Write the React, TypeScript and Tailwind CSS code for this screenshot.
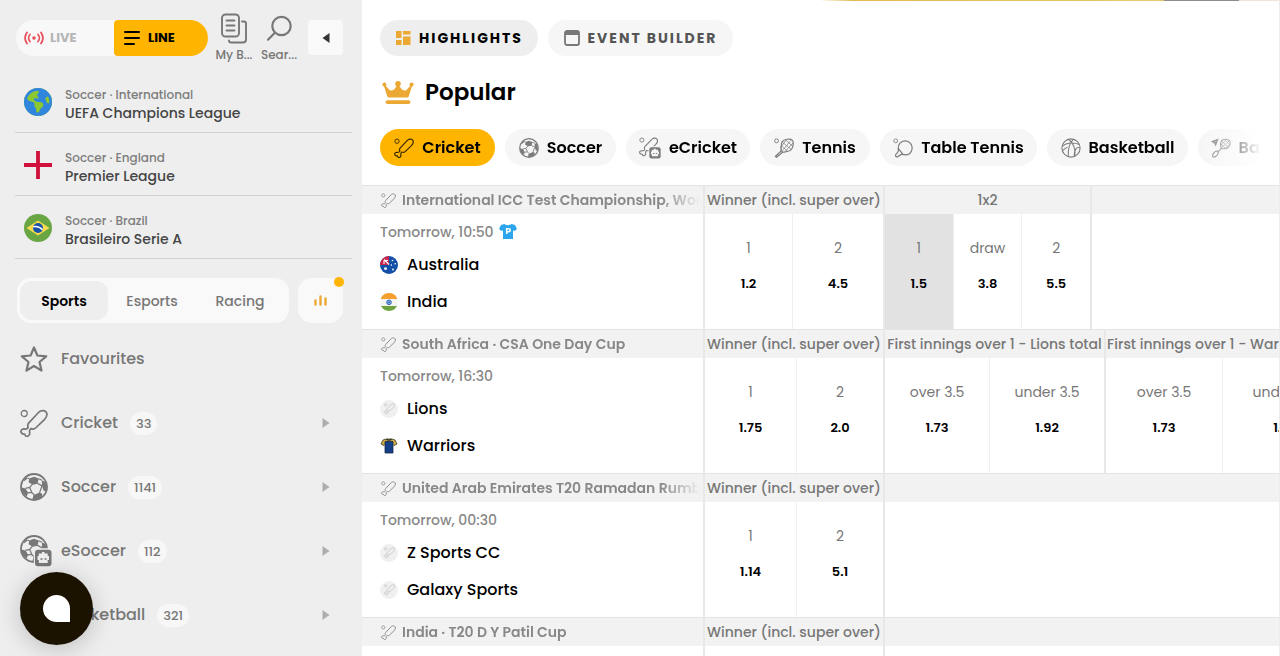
import React from "react";
import { FaEarthAmericas } from "react-icons/fa6";

type IconProps = { className?: string };

const BAT =
  "M19 3c2.500-2 6.500-1.800 7.600.8 1 2.400-.4 5-2.200 6.900L15.600 19c-1.300 1.200-3 1.300-4.600.6-1 .8-1.600 1.800-1.500 3 .7 2-.2 4.200-1.900 4.700-1.600.4-2.700-.9-2.900-2.300-1.900.2-3.600-.6-3.800-2.300-.1-1.900 2-3.100 4.100-2.600 1.400.1 2.500-.5 3.200-1.600-.7-1.600-.6-3.400.6-4.700z";

function CricketIcon({ className }: IconProps) {
  return (
    <svg viewBox="0 0 28 28" className={className} fill="none" stroke="currentColor" strokeWidth="1.700" strokeLinejoin="round" aria-hidden="true">
      <circle cx="4.200" cy="4.500" r="3" strokeWidth="1.300" />
      <path d={BAT} />
    </svg>
  );
}

function BallShape() {
  return (
    <>
      <circle cx="14" cy="14" r="13" fill="none" stroke="currentColor" strokeWidth="1.800" />
      <path
        fill="currentColor"
        d="M9.300 5.600 14 3.800l4.800 1.800-1.200 5.200-4.800.9-4.200-2.400zM1.500 14.500l4 1 2.700 4.300-1.600 3.600C3 21 1.300 17.500 1.500 14.500zM21.800 7.200l3.300 1.500c1.500 3 1.800 6.300.8 9.600l-2.400-.8-1.400-4.600zM14 22l5.300-2.500 3 1.200-.7 3.600c-2.300 1.800-5.300 2.600-8.300 2.200zM6 4.500l1-.6.5 1.800L4 8.300 3.700 7z"
      />
      <path fill="none" stroke="currentColor" strokeWidth="1.200" d="m17.500 10.400 4.700 2.500M12.500 11.200l-2.800 3.200-4.300.9M9.700 14.400l2.100 5 2.600 2.600M11.800 19.400l-4 .5M22 13l-2.500 6.700M18.600 5.800l3.400 1.500M9.500 5.800l-2-.6M14.200 22l-1.200 4.500" />
    </>
  );
}

function SoccerIcon({ className }: IconProps) {
  return (
    <svg viewBox="0 0 28 28" className={className} aria-hidden="true">
      <BallShape />
    </svg>
  );
}

function RobotBadge({ fill }: { fill: string }) {
  return (
    <g>
      <rect x="13.800" y="13.300" width="18.200" height="18.700" rx="3" fill={fill} />
      <rect x="15" y="14.800" width="16.500" height="16.500" rx="3" fill="currentColor" />
      <path fill={fill} d="M18.800 18.500H22v-1.500h2.500v1.500h3.200v2.500h1.300v4h-1.300v3h-8.900v-3h-1.300v-4h1.300z" />
      <path d="M20.500 24h2M24.500 24h2" stroke="currentColor" strokeWidth="1.700" />
    </g>
  );
}

function ESoccerIcon({ className }: IconProps) {
  return (
    <svg viewBox="0 0 32 32" className={className} aria-hidden="true">
      <BallShape />
      <RobotBadge fill="#eeeeee" />
    </svg>
  );
}

function ECricketIcon({ className }: IconProps) {
  return (
    <svg viewBox="0 0 32 32" className={className} fill="none" aria-hidden="true">
      <circle cx="4.200" cy="4.500" r="3" stroke="currentColor" strokeWidth="1.300" />
      <path d={BAT} stroke="currentColor" strokeWidth="1.600" />
      <RobotBadge fill="#f6f6f6" />
    </svg>
  );
}

function TennisIcon({ className }: IconProps) {
  return (
    <svg viewBox="0 0 28 28" className={className} fill="none" stroke="currentColor" strokeWidth="1.700" aria-hidden="true">
      <circle cx="3.500" cy="4" r="2.700" strokeWidth="1.300" />
      <path d="M11.500 5C14 1.500 23 .5 25.500 3c2.500 2.500 1.500 11-2 14-3 2.500-8 2-11.500 3l-2-2c.5-3.500-1-9.500 1.500-13zM10 18l-8 7.500 1.500 1.500L12 20M10 18l-.5-6" />
      <path strokeWidth="1" d="m12 6 12 10M16 2.500l10 9M10.500 11l9 8M24 3 11.500 18M26.500 7 16 18.500M17 2.500l-6 9" />
    </svg>
  );
}

function TableTennisIcon({ className }: IconProps) {
  return (
    <svg viewBox="0 0 28 28" className={className} fill="none" stroke="currentColor" strokeWidth="1.700" strokeLinejoin="round" aria-hidden="true">
      <circle cx="3.800" cy="4" r="2.700" strokeWidth="1.200" />
      <path d="M9.500 7.500c4-4.500 11-4.500 15 0 3.500 4.500 3 11-1.500 14.500-3.500 2.700-7.500 1.500-11 .8-2.500.4-4.500 3.700-6.500 3.700-1.800-.2-2.500-2-1.500-3.500 1.500-2 4-3.500 3.500-6-.5-3.500-.5-6.500 2-9.500zM7.500 15l6.500 8" />
    </svg>
  );
}

function BasketballIcon({ className }: IconProps) {
  return (
    <svg viewBox="0 0 28 28" className={className} fill="none" stroke="currentColor" strokeWidth="1.500" aria-hidden="true">
      <circle cx="14" cy="14" r="12.800" />
      <path d="M17.500 1.700C12 7 9.500 15 10.200 26.200M10.500 1.800c6.500 5 10 13 9 23.700M1.500 11.500C8 6.500 18 5.500 25.500 9M26.500 14c-5-2.500-7.500 2-8 11.500M2 18c2-2 5-4.500 7-5" />
    </svg>
  );
}

function BadmintonIcon({ className }: IconProps) {
  return (
    <svg viewBox="0 0 28 28" className={className} fill="none" stroke="currentColor" strokeWidth="1.500" aria-hidden="true">
      <path d="m1.500 5 8-3-3 8-1.500-3zM5 7l4-4.500M3 4l5 4" />
      <path d="M15 3.500c3-2.500 9-2.500 11 .5s.5 8-3 10c-3 2-6.500 1-8.500.5-1-3-2-8 .5-11zM14.500 14.500 9 20M7 18.500c2-1 4 1 3 3-1 3-4.500 6-7 5-2-2 1-7 4-8z" />
      <path strokeWidth="1" d="m15 4 9 9M19 2l7.500 7.500M14 8l6 6.500M26 3.500 14.500 14M22 2l-8.500 8M27 8l-7 6.500" />
    </svg>
  );
}

function JerseyIcon({ className, letter }: IconProps & { letter?: boolean }) {
  return (
    <svg viewBox="0 0 18 16" className={className} aria-hidden="true">
      {letter ? (
        <>
          <path fill="#2aa5ee" d="M5.500 0C7 1.600 11 1.600 12.500 0L16 1l2 4-2.500 2L14 6.200V15H4V6.200L2.500 7 0 5l2-4z" />
          <path fill="none" stroke="#fff" strokeWidth="1.600" d="M7.700 10V4.700h1.900c2.200 0 2.200 3 0 3H7.700" />
        </>
      ) : (
        <>
          <path fill="#d2aa46" stroke="#3c3c26" strokeWidth=".8" d="M6 1h6l3 1 2 4-3 1.500-1-1H5l-1 1L1 6l2-4z" />
          <path fill="#123f86" stroke="#172a4a" strokeWidth=".8" d="M5 3.500h8V15H5z" />
          <path fill="none" stroke="#26321f" strokeWidth="1.200" d="M6.500 1.200c1 1.300 4 1.300 5 0" />
        </>
      )}
    </svg>
  );
}

function AustraliaFlag({ className }: IconProps) {
  return (
    <svg viewBox="0 0 18 18" className={className} aria-hidden="true">
      <circle cx="9" cy="9" r="9" fill="#1450a8" />
      <path fill="#c8284b" d="M9 0v9H0a9 9 0 0 1 9-9z" />
      <path stroke="#fff" strokeWidth="1.100" fill="none" d="m4 3.500 5 5M4 8V4.500M4 4.500h4" />
      <g fill="#fff">
        <circle cx="5.500" cy="12.700" r="1.400" />
        <circle cx="12.500" cy="4.500" r=".8" />
        <circle cx="15.200" cy="7.800" r=".8" />
        <circle cx="11.300" cy="9" r=".8" />
        <circle cx="13" cy="13.500" r=".9" />
      </g>
    </svg>
  );
}

function IndiaFlag({ className }: IconProps) {
  return (
    <svg viewBox="0 0 18 18" className={className} aria-hidden="true">
      <path fill="#f3a02f" d="M1 5a9 9 0 0 1 16 0v1H1z" />
      <path fill="#f4f4f4" d="M.5 6h17v7H.5z" />
      <path fill="#6ba43f" d="M1 13h16a9 9 0 0 1-16 0z" />
      <circle cx="9" cy="9.300" r="2.300" fill="#8fb8e4" stroke="#2a62b0" strokeWidth="1" />
      <circle cx="9" cy="9.300" r=".9" fill="#2a62b0" />
    </svg>
  );
}

function GenericTeam({ className }: IconProps) {
  return (
    <span className={`flex items-center justify-center rounded-full bg-[#f0f0f0] text-[#b5b5b5] ${className}`}>
      <CricketIcon className="size-[11px]" />
    </span>
  );
}

function GlobeFlag() {
  return (
    <span className="flex size-7 items-center justify-center rounded-full bg-[#8bc832]">
      <FaEarthAmericas className="size-7 text-[#2f86dc]" />
    </span>
  );
}

function EnglandFlag() {
  return (
    <svg viewBox="0 0 28 28" className="size-7" aria-hidden="true">
      <path stroke="#d0103a" strokeWidth="3.800" d="M14 0v28M0 14h28" />
    </svg>
  );
}

function BrazilFlag() {
  return (
    <svg viewBox="0 0 28 28" className="size-7" aria-hidden="true">
      <circle cx="14" cy="14" r="14" fill="#6aa544" />
      <path fill="#f8dc50" d="m14 6.500 11.500 7.500L14 21.500 2.500 14z" />
      <circle cx="14" cy="14" r="5" fill="#1753a6" />
      <path fill="none" stroke="#fff" strokeWidth="1.500" d="M9.200 12.800c3.500-.7 7 .4 9.300 3" />
    </svg>
  );
}

const leagues = [
  { place: "Soccer · International", name: "UEFA Champions League", flag: <GlobeFlag /> },
  { place: "Soccer · England", name: "Premier League", flag: <EnglandFlag /> },
  { place: "Soccer · Brazil", name: "Brasileiro Serie A", flag: <BrazilFlag /> },
];

const sports = [
  { name: "Cricket", count: "33", icon: <CricketIcon className="size-7" /> },
  { name: "Soccer", count: "1141", icon: <SoccerIcon className="size-7" /> },
  { name: "eSoccer", count: "112", icon: <ESoccerIcon className="size-8" /> },
  { name: "Basketball", count: "321", icon: <BasketballIcon className="size-7" /> },
];

const chips = [
  { name: "Cricket", width: "w-[115px]", icon: <CricketIcon className="size-5" /> },
  { name: "Soccer", width: "w-[111px]", icon: <SoccerIcon className="size-5" /> },
  { name: "eCricket", width: "w-[124px]", icon: <ECricketIcon className="size-[22px]" /> },
  { name: "Tennis", width: "w-[110px]", icon: <TennisIcon className="size-5" /> },
  { name: "Table Tennis", width: "w-[157px]", icon: <TableTennisIcon className="size-5" /> },
  { name: "Basketball", width: "w-[141px]", icon: <BasketballIcon className="size-5" /> },
  { name: "Badminton", width: "w-[144px]", icon: <BadmintonIcon className="size-5" /> },
];

type Odd = { label: string; value: string; width: string; active?: boolean };
type Market = { title: string; width: string; odds: Odd[] };
type Match = {
  league: string;
  time: string;
  jersey?: boolean;
  teams: { name: string; icon: React.ReactNode }[];
  markets: Market[];
};

const teamIcon = "size-[18px] shrink-0";

const matches: Match[] = [
  {
    league: "International ICC Test Championship, World",
    time: "Tomorrow, 10:50",
    jersey: true,
    teams: [
      { name: "Australia", icon: <AustraliaFlag className={teamIcon} /> },
      { name: "India", icon: <IndiaFlag className={teamIcon} /> },
    ],
    markets: [
      {
        title: "Winner (incl. super over)",
        width: "w-[180px]",
        odds: [
          { label: "1", value: "1.2", width: "w-[88px]" },
          { label: "2", value: "4.5", width: "flex-1" },
        ],
      },
      {
        title: "1x2",
        width: "w-[207px]",
        odds: [
          { label: "1", value: "1.5", width: "flex-1", active: true },
          { label: "draw", value: "3.8", width: "flex-1" },
          { label: "2", value: "5.5", width: "flex-1" },
        ],
      },
    ],
  },
  {
    league: "South Africa · CSA One Day Cup",
    time: "Tomorrow, 16:30",
    teams: [
      { name: "Lions", icon: <GenericTeam className={teamIcon} /> },
      { name: "Warriors", icon: <JerseyIcon className={teamIcon} /> },
    ],
    markets: [
      {
        title: "Winner (incl. super over)",
        width: "w-[180px]",
        odds: [
          { label: "1", value: "1.75", width: "w-[92px]" },
          { label: "2", value: "2.0", width: "flex-1" },
        ],
      },
      {
        title: "First innings over 1 - Lions total",
        width: "w-[221px]",
        odds: [
          { label: "over 3.5", value: "1.73", width: "w-[105px]" },
          { label: "under 3.5", value: "1.92", width: "flex-1" },
        ],
      },
      {
        title: "First innings over 1 - Warriors total",
        width: "w-[243px]",
        odds: [
          { label: "over 3.5", value: "1.73", width: "w-[117px]" },
          { label: "under 3.5", value: "1.92", width: "flex-1" },
        ],
      },
    ],
  },
  {
    league: "United Arab Emirates T20 Ramadan Rumble",
    time: "Tomorrow, 00:30",
    teams: [
      { name: "Z Sports CC", icon: <GenericTeam className={teamIcon} /> },
      { name: "Galaxy Sports", icon: <GenericTeam className={teamIcon} /> },
    ],
    markets: [
      {
        title: "Winner (incl. super over)",
        width: "w-[180px]",
        odds: [
          { label: "1", value: "1.14", width: "w-[92px]" },
          { label: "2", value: "5.1", width: "flex-1" },
        ],
      },
    ],
  },
  {
    league: "India · T20 D Y Patil Cup",
    time: "",
    teams: [],
    markets: [{ title: "Winner (incl. super over)", width: "w-[180px]", odds: [] }],
  },
];

function Sidebar() {
  return (
    <aside className="w-[362px] shrink-0 overflow-hidden bg-[#eeeeee] pt-3 text-[#777777]">
      <div className="flex h-[58px] items-start pl-4">
        <div className="mt-2 flex h-9 w-48 overflow-hidden rounded-full bg-[#f8f8f8] text-[13px] font-bold">
          <button className="flex w-[98px] items-center gap-1.5 pl-2 text-[#b5b5b5]">
            <svg viewBox="0 0 20 14" className="h-[14px] w-5" fill="none" stroke="#e8505b" strokeWidth="1.800" strokeLinecap="round" aria-hidden="true">
              <circle cx="10" cy="7" r="1.800" fill="#e8505b" stroke="none" />
              <path d="M6 3.500c-1.800 2-1.800 5 0 7M14 3.500c1.800 2 1.800 5 0 7M3 1.500c-2.500 3.500-2.500 7.500 0 11M17 1.500c2.500 3.500 2.500 7.500 0 11" />
            </svg>
            LIVE
          </button>
          <button className="flex flex-1 items-center gap-2 rounded-l-sm bg-[#ffb400] pl-2.5 text-black">
            <svg viewBox="0 0 16 14" className="h-[14px] w-4" stroke="currentColor" strokeWidth="2" strokeLinecap="round" aria-hidden="true">
              <path d="M1 1h14M1 7h14M1 13h9" />
            </svg>
            LINE
          </button>
        </div>
        <button className="ml-2 flex w-9 flex-col items-center text-[12px] leading-4 font-medium whitespace-nowrap">
          <svg viewBox="0 0 26 32" className="h-8 w-[26px]" fill="none" stroke="currentColor" strokeWidth="1.900" strokeLinecap="round" aria-hidden="true">
            <rect x="1" y="2.500" width="17" height="22" rx="3.500" />
            <path d="M5.500 8.500h8M5.500 13.500h8M5.500 18.500h8M21 9.500h2q2 0 2 2v16q0 3-3 3H10q-2 0-2-2" />
          </svg>
          <span className="mt-[3px]">My B...</span>
        </button>
        <button className="ml-[9px] flex w-9 flex-col items-center text-[12px] leading-4 font-medium whitespace-nowrap">
          <svg viewBox="0 0 26 32" className="h-8 w-[26px]" fill="none" stroke="currentColor" strokeWidth="2.200" strokeLinecap="round" aria-hidden="true">
            <circle cx="15.500" cy="14" r="9.200" />
            <path d="m8.800 20.700-6.800 7" />
          </svg>
          <span className="mt-[3px]">Sear...</span>
        </button>
        <button className="mt-2 ml-[11px] flex size-[35px] items-center justify-center rounded bg-[#f9f9f9]" aria-label="Collapse">
          <svg viewBox="0 0 8 10" className="h-[10px] w-2" fill="#333333" aria-hidden="true">
            <path d="M7.500 0v10L.5 5z" />
          </svg>
        </button>
      </div>

      <ul className="mr-[10px] ml-[15px]">
        {leagues.map((l) => (
          <li key={l.name} className="h-[63px] border-b border-[#d2d2d2] pt-4">
            <a href="#league" className="flex items-start gap-[13px] pl-[9px]">
              <span className="pt-0.5">{l.flag}</span>
              <span className="flex flex-col">
                <span className="text-[12px] leading-[18px] font-medium text-[#7d7d7d]">{l.place}</span>
                <span className="text-sm leading-[18px] font-medium text-[#444444]">{l.name}</span>
              </span>
            </a>
          </li>
        ))}
      </ul>

      <div className="mt-[19px] flex gap-[9px] pl-[17px]">
        <div className="flex h-[45px] w-[272px] rounded-[14px] bg-[#f9f9f9] p-[3px] text-sm font-medium">
          <button className="w-[88px] rounded-xl bg-[#eeeeee] font-semibold text-black">Sports</button>
          <button className="w-[88px]">Esports</button>
          <button className="w-[88px]">Racing</button>
        </div>
        <button className="relative flex size-[45px] items-center justify-center rounded-[14px] bg-[#f9f9f9]" aria-label="Statistics">
          <svg viewBox="0 0 13 11" className="h-[11px] w-[13px]" stroke="#eba833" strokeWidth="2.400" strokeLinecap="round" aria-hidden="true">
            <path d="M1.500 5.500v4M6.500 1.500v8M11.500 3.500v6" />
          </svg>
          <span className="absolute -top-px -right-px size-[10px] rounded-full bg-[#ffb400]" />
        </button>
      </div>

      <nav className="mt-1 pl-5">
        <a href="#favourites" className="flex h-16 items-center gap-[13px] text-base font-medium">
          <svg viewBox="0 0 28 28" className="size-7" fill="none" stroke="currentColor" strokeWidth="2.200" strokeLinejoin="round" aria-hidden="true">
            <path d="m14 2.500 3.400 8 8.800.8-6.700 5.700 2 8.600L14 21l-7.500 4.600 2-8.600-6.700-5.700 8.800-.8z" />
          </svg>
          Favourites
        </a>
        {sports.map((s) => (
          <a key={s.name} href="#sport" className="flex h-16 items-center pr-8 text-base font-medium">
            <span className="flex w-[41px] items-center">{s.icon}</span>
            {s.name}
            <span className="ml-3 rounded-full bg-[#f7f7f7] px-[6px] text-[13px] leading-[23px]">{s.count}</span>
            <svg viewBox="0 0 8 10" className="ml-auto h-[10px] w-2" fill="#adadad" aria-hidden="true">
              <path d="M.5 0v10l7-5z" />
            </svg>
          </a>
        ))}
      </nav>
    </aside>
  );
}

function MatchBlock({ match }: { match: Match }) {
  return (
    <section className="flex h-36">
      <div className="flex w-[343px] shrink-0 flex-col border-r-2 border-[#e8e8e8]">
        <div className="flex h-[29px] shrink-0 items-center gap-[6px] border-t border-[#e4e4e4] bg-[#f2f2f2] pl-[19px] text-[#888888]">
          <CricketIcon className="size-[15px] shrink-0" />
          <h3 className="flex-1 overflow-hidden text-sm font-semibold whitespace-nowrap [mask-image:linear-gradient(to_right,black_86%,transparent_99%)]">
            {match.league}
          </h3>
        </div>
        {match.time && (
          <div className="pt-2 pl-[18px]">
            <div className="mb-1 flex h-5 items-center gap-[5px] text-sm font-medium text-[#888888]">
              {match.time}
              {match.jersey && <JerseyIcon letter className="h-4 w-[18px]" />}
            </div>
            {match.teams.map((t) => (
              <div key={t.name} className="flex h-[37px] items-center gap-[9px] text-base font-medium text-black">
                {t.icon}
                {t.name}
              </div>
            ))}
          </div>
        )}
      </div>
      {match.markets.map((m) => (
        <div key={m.title} className={`flex shrink-0 flex-col border-r-2 border-[#e8e8e8] ${m.width}`}>
          <h4 className="flex h-[29px] shrink-0 items-center justify-center border-t border-[#e4e4e4] bg-[#f2f2f2] text-sm font-medium whitespace-nowrap text-[#777777]">
            {m.title}
          </h4>
          <div className="flex flex-1 divide-x divide-[#efefef]">
            {m.odds.map((o) => (
              <button
                key={o.label}
                className={`flex flex-col items-center gap-4 pt-6 whitespace-nowrap ${o.width} ${o.active ? "bg-[#e2e2e2]" : "bg-white"}`}
              >
                <span className="text-sm leading-5 text-[#777777]">{o.label}</span>
                <span className="text-[13px] leading-5 font-semibold text-black">{o.value}</span>
              </button>
            ))}
          </div>
        </div>
      ))}
      <div className="min-w-0 flex-1">
        <div className="h-[29px] border-t border-[#e4e4e4] bg-[#f2f2f2]" />
      </div>
    </section>
  );
}

export default function App() {
  return (
    <div className="flex h-screen overflow-hidden bg-white font-['Poppins','Inter',sans-serif]">
      <Sidebar />
      <main className="min-w-0 flex-1 overflow-hidden border-r border-[#ececec]">
        <div className="flex h-px justify-end">
          <div className="w-[345px] bg-linear-to-r from-white via-[#e0bb50] via-10% to-[#e8c96a]" />
          <div className="w-[75px] bg-[#8d8d8d]" />
          <div className="w-10 bg-[#f0e6d8]" />
        </div>
        <div className="flex gap-[10px] pt-[19px] pl-[18px] text-sm font-bold tracking-[2px]">
          <button className="flex h-9 w-[158px] items-center justify-center gap-2 rounded-full bg-[#eeeeee] text-black">
            <svg viewBox="0 0 16 14" className="h-[14px] w-4 shrink-0" fill="#eba833" aria-hidden="true">
              <path d="M1 0h5.500v7H1zM8 0h7.500v3.500H8zM1 9h5.500v5H1zM8 5.500h7.500V14H8z" />
            </svg>
            HIGHLIGHTS
          </button>
          <button className="flex h-9 w-[185px] items-center justify-center gap-2 rounded-full bg-[#f6f6f6] text-[#555555]">
            <svg viewBox="0 0 16 16" className="size-4 shrink-0 text-[#777777]" aria-hidden="true">
              <rect x="1" y="1" width="14" height="14" rx="2" fill="none" stroke="currentColor" strokeWidth="1.800" />
              <path d="M1 1h14v4H1z" fill="currentColor" />
            </svg>
            EVENT BUILDER
          </button>
        </div>
        <h2 className="mt-5 flex h-8 items-center gap-[11px] pl-5 text-[23px] font-semibold text-black">
          <svg viewBox="0 0 32 23" className="h-[23px] w-8" fill="#eba833" aria-hidden="true">
            <circle cx="16" cy="2.800" r="2.800" />
            <circle cx="2.400" cy="3.600" r="2" />
            <circle cx="29.600" cy="3.600" r="2" />
            <path d="M1.800 4.500 3 4l5 5.500q2.500.5 4.500-1.500L16 3l3.500 5q2 2 4.500 1.500L29 4l1.200.5-3.500 11q-.5 1-1.700 1H7q-1.200 0-1.700-1z" />
            <rect x="3.500" y="19.300" width="25" height="3.600" rx="1.800" />
          </svg>
          Popular
        </h2>
        <div className="mx-[18px] mt-[21px] flex gap-[10px] overflow-hidden [mask-image:linear-gradient(to_right,black_93%,transparent_100%)]">
          {chips.map((c, i) => (
            <button
              key={c.name}
              className={`flex h-[37px] shrink-0 items-center justify-center gap-2 rounded-full text-base font-semibold whitespace-nowrap ${c.width} ${i === 0 ? "bg-[#ffb400]" : "bg-[#f6f6f6]"}`}
            >
              <span className={i === 0 ? "text-[#3a2a00]" : "text-[#7c7c7c]"}>{c.icon}</span>
              <span className="text-black">{c.name}</span>
            </button>
          ))}
        </div>
        <div className="mt-[19px]">
          {matches.map((m) => (
            <MatchBlock key={m.league} match={m} />
          ))}
        </div>
      </main>
      <button
        className="fixed bottom-[11px] left-5 flex size-[73px] items-center justify-center rounded-full bg-[#1c1200] shadow-[0_4px_24px_rgba(0,0,0,0.2)]"
        aria-label="Open chat"
      >
        <span className="size-[27px] rounded-full rounded-br-none bg-white" />
      </button>
    </div>
  );
}
